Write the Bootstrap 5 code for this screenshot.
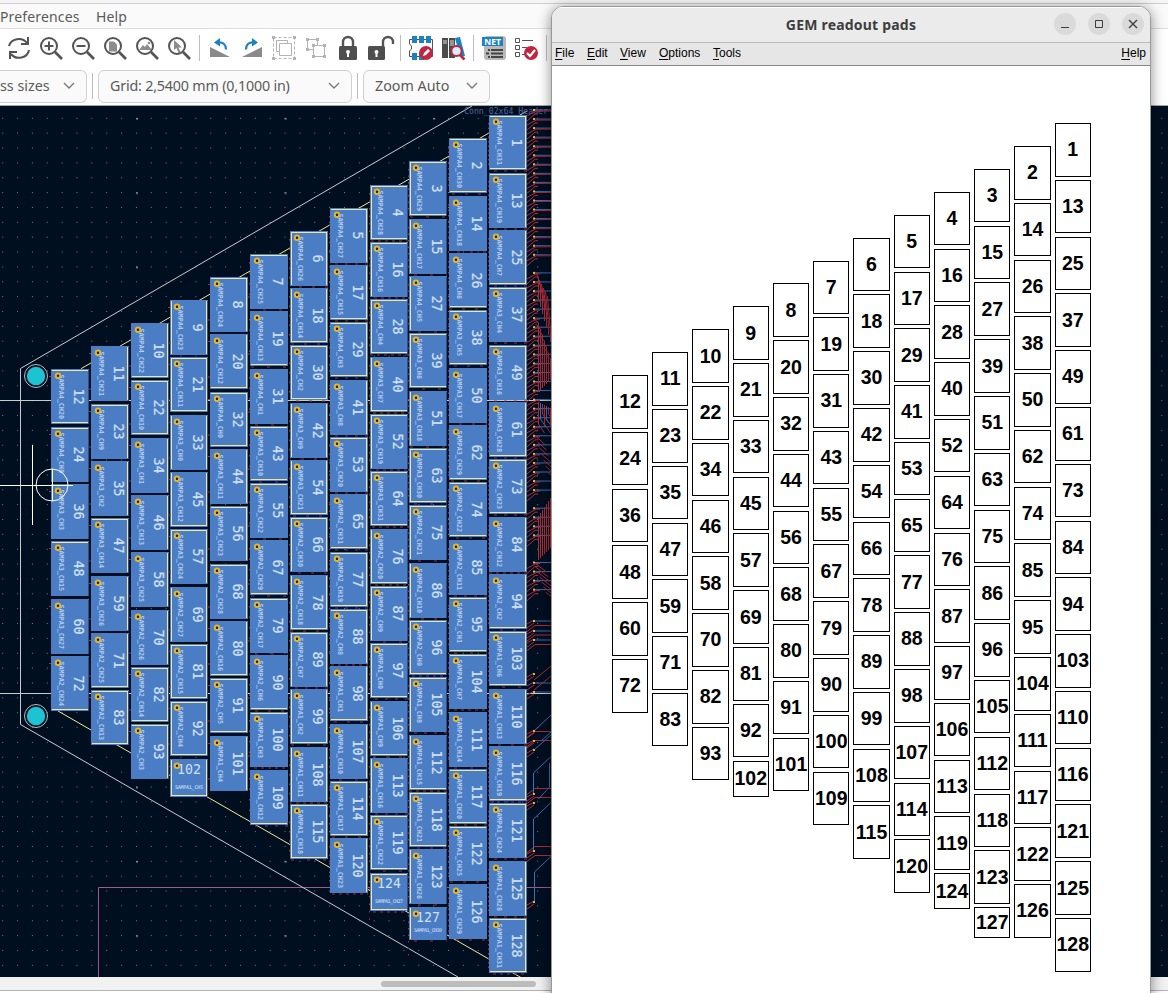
<!DOCTYPE html>
<html lang="en">
<head>
<meta charset="utf-8">
<meta name="viewport" content="width=device-width, initial-scale=1">
<title>GEM readout pads</title>
<link href="https://cdn.jsdelivr.net/npm/bootstrap@5.3.0/dist/css/bootstrap.min.css" rel="stylesheet">
<style>
body{width:1168px;height:993px;overflow:hidden;background:#fff;font-family:"Noto Sans","Open Sans",sans-serif;color:#5a5a5a}
.editor{height:993px}
.topstrip{height:4px;background:#f6f6f6;border-bottom:1px solid #cfcfcf}
.menurow{height:25px;background:#fafafa;border-bottom:1px solid #dedede;font-size:14px;line-height:25px;letter-spacing:.15px;white-space:nowrap}
.menurow span{display:block}
.toolrow{height:38px;padding-left:3px}
.toolrow svg{width:32px;height:32px;flex:none}
.vsep{width:9px;height:26px;flex:none;background:linear-gradient(#bdbdbd,#bdbdbd) 4px 0/1px 100% no-repeat}
.comborow{height:39px;border-bottom:1px solid #a5a5a5}
.combo{height:33px;border:1px solid #d0d0d0;border-radius:6px;background:#fafafa;font-size:14.3px;padding:0 11px;white-space:nowrap}
.gridcombo span{letter-spacing:-.19px}
.board{height:871px;background:#000f20}
.board svg{display:block}
.hscroll{height:14px;background:#f1f1f1;border-bottom:1px solid #b4b4b4}
.thumb{width:155px;height:6px;border-radius:3px;background:#bcbcbc;margin-left:381px}
.dialogwin{left:551px;top:6px;width:600px;height:1010px;background:#fff;border:1px solid #999;border-radius:12px 12px 0 0;box-shadow:0 2px 14px rgba(0,0,0,.45);overflow:hidden}
.titlebar{height:36px;background:#ebebeb;border-bottom:1px solid #b9b9b9;box-shadow:inset 0 1px #fff}
.wintitle{font:bold 14px "Noto Sans",sans-serif;letter-spacing:.2px;color:#3d3d3d;white-space:nowrap}
.winbtn{width:22px;height:22px;border-radius:50%;background:#dadada}
.winbtns{right:6px;top:6px;gap:12px}
.winmenu{height:23px;background:#e6e6e6;border-bottom:1px solid #868686;font:12px/21px "Liberation Sans",sans-serif;color:#000;padding:0 4px 0 3px}
.winmenu u{text-underline-offset:2px}
.padfield{padding:57.1px 0 0 59.83px;gap:3.87px}
.padcol{width:36.4px;flex:none;gap:3.24px}
.pad{border:1px solid #000;height:53.55px;flex:none;font:bold 19.5px "Liberation Sans",sans-serif;color:#000}
.pad.h36{height:36px}.pad.h31{height:31px}
text{font-family:"DejaVu Sans Mono",monospace}
</style>
</head>
<body>
<div class="editor d-flex flex-column position-relative">
  <div class="topstrip"></div>
  <div class="menurow d-flex"><span style="width:96px">Preferences</span><span>Help</span></div>
  <div class="toolrow d-flex align-items-center">
    <svg viewBox="-16 -16 32 32" fill="none" stroke="#545454" stroke-width="2"><path d="M-10-2a10 9 0 0 1 18-3M9-11v7H2M10 2A10 9 0 0 1-8 6M-9 11V4h7"/></svg>
    <svg viewBox="-16 -16 32 32" fill="none" stroke="#545454" stroke-width="2"><circle cx="-2" cy="-2" r="8"/><path d="M4 4l7 7" stroke-width="2.6"/><path d="M-6.500-2h9M-2-6.500v9"/></svg>
    <svg viewBox="-16 -16 32 32" fill="none" stroke="#545454" stroke-width="2"><circle cx="-2" cy="-2" r="8"/><path d="M4 4l7 7" stroke-width="2.6"/><path d="M-6.500-2h9"/></svg>
    <svg viewBox="-16 -16 32 32" fill="none" stroke="#545454" stroke-width="2"><path d="M-6-6.500h5l3 3v7h-8z" fill="#8c8c8c" stroke="none"/><circle cx="-2" cy="-2" r="8"/><path d="M4 4l7 7" stroke-width="2.6"/></svg>
    <svg viewBox="-16 -16 32 32" fill="none" stroke="#545454" stroke-width="2"><path d="M-8 2l4-5 2 2 2-3 5 6z" fill="#8c8c8c" stroke="none"/><circle cx="2" cy="-5" r="1.300" fill="#8c8c8c" stroke="none"/><circle cx="-2" cy="-2" r="8"/><path d="M4 4l7 7" stroke-width="2.6"/></svg>
    <svg viewBox="-16 -16 32 32" fill="none" stroke="#545454" stroke-width="2"><path d="M-5-8v10l2.500-2 2 5 2-1-2-4.500h3.500z" fill="#8c8c8c" stroke="none"/><circle cx="-2" cy="-2" r="8"/><path d="M4 4l7 7" stroke-width="2.6"/></svg>
    <i class="vsep"></i>
    <svg viewBox="-16 -16 32 32"><path d="M-10-1v10H10z" fill="#8a8a8a"/><path d="M-3-5.500c6-1 9 2 9 7" fill="none" stroke="#1a81c4" stroke-width="2.200"/><path d="M0-10l-6 4.500 6 4z" fill="#1a81c4"/></svg>
    <svg viewBox="-16 -16 32 32"><path d="M10-1v10H-10z" fill="#8a8a8a"/><path d="M3-5.500c-6-1-9 2-9 7" fill="none" stroke="#1a81c4" stroke-width="2.200"/><path d="M0-10l6 4.500-6 4z" fill="#1a81c4"/></svg>
    <svg viewBox="-16 -16 32 32" fill="none" stroke="#b3b3b3"><path d="M-10.500-10.500h21v21h-21z" stroke-dasharray="3 2"/><path d="M-7.500-7.500h11v11h-11z"/><path d="M-4.500-4.500h12v12h-12z" fill="#fff"/><g fill="#b3b3b3" stroke="none"><path d="M-12-12h3v3h-3zM9-12h3v3H9zM-12 9h3v3h-3zM9 9h3v3H9z"/></g></svg>
    <svg viewBox="-16 -16 32 32" fill="none" stroke="#b3b3b3"><path d="M-8.500-8.500h10v10h-10z"/><path d="M-2.500-2.500h11v11h-11z" fill="#fff"/><path d="M-10-10h3v3h-3zM0-10h3v3H0zM-10 0h3v3h-3zM-4-4h3v3h-3zM7-4h3v3H7zM-4 7h3v3h-3zM7 7h3v3H7z" fill="#b3b3b3" stroke="none"/></svg>
    <svg viewBox="-16 -16 32 32"><path d="M-5 0v-6a5 5 0 0 1 10 0v6" fill="none" stroke="#545454" stroke-width="2.400"/><rect x="-9" y="-2" width="18" height="14" rx="1.500" fill="#4e4e4e"/><path d="M-2 4a2 2 0 1 1 4 0l-1 2v3h-2V6z" fill="#fff"/></svg>
    <svg viewBox="-16 -16 32 32"><path d="M3 0v-6a5 5 0 0 1 10 0v2" fill="none" stroke="#545454" stroke-width="2.400"/><rect x="-12" y="-2" width="17" height="14" rx="1.500" fill="#4e4e4e"/><path d="M-5.500 4a2 2 0 1 1 4 0l-1 2v3h-2V6z" fill="#fff"/></svg>
    <i class="vsep"></i>
    <svg viewBox="-16 -16 32 32"><path d="M-11.500-8.500h23V8.500h-23V3l2-2v-3l-2-2z" fill="#fff" stroke="#545454"/><path d="M-9-12h5v7h-5zM-2-12h5v7h-5zM5-12h5v7H5zM-9 5h5v7h-5zM-2 5h5v7h-5z" fill="#1a81c4"/><circle cx="5" cy="5" r="7" fill="#bf2641"/><path d="M2 8l1-3 4-4 2 2-4 4z" fill="#fff"/></svg>
    <svg viewBox="-16 -16 32 32"><path d="M-11-10h6v20h-6zM-4-10h6v20h-6z" fill="#4b4b4b"/><path d="M-10-7h4M-10-5h4M-3-7h4M-3-5h4M-3-3h4" stroke="#ddd"/><path d="M2-10l5-1 5 19-5 1z" fill="#1a81c4"/><circle cx="3.500" cy="3" r="5" fill="#d7eef8" stroke="#bf2641" stroke-width="1.800"/><path d="M7 7l4.500 4.500" stroke="#bf2641" stroke-width="2.600"/></svg>
    <i class="vsep"></i>
    <svg viewBox="-16 -16 32 32"><rect x="-10" y="-12" width="22" height="24" rx="3" fill="#b9b9b9"/><path d="M-6 2h2M-3 2H9M-8 5.500h3M-3 5.500H9M-6 9h2M-3 9H9" stroke="#454545" stroke-width="2"/><path d="M-12-11H9v9h-21z" fill="#1a81c4"/><text x="-1.500" y="-3.500" font-size="8.500" font-weight="bold" fill="#fff" text-anchor="middle" style="font-family:'Noto Sans'">NET</text></svg>
    <svg viewBox="-16 -16 32 32" fill="none" stroke="#545454"><path d="M-10.500-9.500h4v4h-4zM-10.500-2.500h4v4h-4zM-10.500 4.500h4v4h-4zM-4-7.500H7M-4-.5h5M-4 6.500h3"/><circle cx="5" cy="5" r="7" fill="#bf2641" stroke="none"/><path d="M1 5l3 3 5-6" stroke="#fff" stroke-width="2.200"/></svg>
    <i class="vsep"></i>
  </div>
  <div class="comborow d-flex align-items-center">
    <div class="combo d-flex align-items-center justify-content-between rounded-start-0 border-start-0 ps-0" style="width:87px"><span>ss sizes</span><svg width="12" height="8" fill="none" stroke="#777" stroke-width="1.300"><path d="M1 1l5 5 5-5"/></svg></div>
    <i class="vsep" style="margin-left:1px"></i>
    <div class="combo gridcombo d-flex align-items-center justify-content-between" style="width:254px;margin-left:1px"><span>Grid: 2,5400 mm (0,1000 in)</span><svg width="12" height="8" fill="none" stroke="#777" stroke-width="1.300"><path d="M1 1l5 5 5-5"/></svg></div>
    <i class="vsep" style="margin-left:1px"></i>
    <div class="combo d-flex align-items-center justify-content-between" style="width:127px;margin-left:1px"><span>Zoom Auto</span><svg width="12" height="8" fill="none" stroke="#777" stroke-width="1.300"><path d="M1 1l5 5 5-5"/></svg></div>
  </div>
  <div class="board"><svg id="pcb" width="1168" height="871" viewBox="0 106 1168 871"></svg></div>
  <div class="hscroll d-flex align-items-center"><div class="thumb"></div></div>

  <div class="dialogwin position-absolute">
    <div class="titlebar position-relative d-flex align-items-center justify-content-center">
      <span class="wintitle">GEM readout pads</span>
      <div class="winbtns position-absolute d-flex">
        <svg class="winbtn" viewBox="0 0 22 22"><path d="M7 14.500h8" stroke="#3d3d3d"/></svg>
        <svg class="winbtn" viewBox="0 0 22 22"><path d="M7.500 7.500h7v7h-7z" stroke="#3d3d3d" fill="none"/></svg>
        <svg class="winbtn" viewBox="0 0 22 22"><path d="M7 7l8 8M15 7l-8 8" stroke="#3d3d3d" stroke-width="1.300"/></svg>
      </div>
    </div>
    <div class="winmenu d-flex"><span style="width:32px"><u>F</u>ile</span><span style="width:33px"><u>E</u>dit</span><span style="width:39px"><u>V</u>iew</span><span style="width:54px"><u>O</u>ptions</span><span><u>T</u>ools</span><span class="ms-auto"><u>H</u>elp</span></div>
    <div class="padfield d-flex align-items-start" id="pads"></div>
  </div>
</div>
<script src="https://cdn.jsdelivr.net/npm/bootstrap@5.3.0/dist/js/bootstrap.bundle.min.js"></script>
<script>
// Pad numbers per column, rightmost column first
const counts=[15,14,14,13,12,11,10,9,9,8,7,6];
const cols=counts.map(()=>[]);
let n=1;
for(let r=0;r<15;r++)for(let c=0;c<12;c++)if(r<counts[c])cols[c].push(n++);

// Readout window
const field=document.getElementById('pads');
for(let c=11;c>=0;c--){
  const d=document.createElement('div');
  d.className='padcol d-flex flex-column';
  d.style.marginTop=(c*22.91)+'px';
  d.innerHTML=cols[c].map(k=>`<div class="pad d-flex align-items-center justify-content-center ${k==127?'h31':k==102||k==124?'h36':''}">${k}</div>`).join('');
  field.appendChild(d);
}

// Board view
const L=(x1,y1,x2,y2,s,w=1,x='')=>`<path d="M${x1} ${y1}L${x2} ${y2}" stroke="${s}" stroke-width="${w}" ${x}/>`;
const P=(d,s)=>`<path d="${d}" fill="none" stroke="${s}"/>`;
const red='#b32a35',blue='#3e6fb8',gold='#e3b62c',yel='#eee79c',grey='#c6cbd0';
let s=`<defs><pattern id="g" x="2.2" y="117.800" width="14.860" height="14.860" patternUnits="userSpaceOnUse"><rect width="1" height="1" fill="#78808a"/></pattern>
<pattern id="h" x="136" y="118" width="148.600" height="74.300" patternUnits="userSpaceOnUse"><rect width="2" height="1.500" fill="#858b93"/></pattern></defs>
<rect y="106" width="1168" height="871" fill="url(#g)"/><rect y="106" width="1168" height="871" fill="url(#h)"/>`;
s+=L(0,400.5,551,400.5,grey)+L(0,693.5,551,693.5,grey);
s+=P('M98.5 977V887.500H551','#a0588f');
s+=P('M472 106L20.500 368.500V724.500L458 977',grey);
s+=L(81,368.7,527,111,yel)+L(58,711,527,981,yel);
s+=`<text x="464" y="113.500" font-size="8" fill="#56639a" textLength="84" lengthAdjust="spacingAndGlyphs">Conn_02x64_Header</text>`;
// Fan-out traces beside the right column
const vias=[];
for(let y=110;y<595;y+=9.05){
  if(Math.abs(y-262)<5||Math.abs(y-500)<6||Math.abs(y-553)<9)continue;
  vias.push(y);
  s+=L(534,y,551,y,blue)+P(`M527 ${y+6}l9-5h${y<265?15:4}`,red)+P(`M527 ${y+11}l8-7h3`,red);
}
// Bundled vertical runs
for(let i=0;i<7;i++){const x=538.5+i*2;
  s+=P(`M${x-3} ${272+i*4}L${x} ${278+i*9}V${300+i*7}`,red);
  s+=P(`M${x-5} ${318+i*6}L${x} ${323+i*6}V${392-i*2}`,red);
  s+=P(`M${x} ${402+i}V${424-(i%3)*5}l6 9`,i%3==1?blue:red);
  s+=P(`M${x-3} ${436+i*6}L${x+6} ${444+i*6}`,red);
  s+=P(`M${x} ${516-i*3}V${560-i*2}`,red);
  s+=P(`M${x-5} ${562+i*5}l13 10`,red);
}
[621,631,640,683,692].forEach(y=>{s+=L(534,y,551,y,blue)});
[621,631,640,674,683,692,731,741,750,794,803,851,902].forEach(y=>{vias.push(y);s+=P(`M527 ${y+7}l7-5`,red)+P(`M527 ${y+3}l7-4`,red)});
[625.5,635,644.5,731.5,740.5,788.5,797.5,846.5,855.5].forEach(y=>{s+=P(`M527 ${y+6}l8-6h16`,red)});
[680,690].forEach(y=>{s+=P(`M534 ${y}l17-14`,red)});
s+=P('M534 731l17-16M534 750l17-15M541 741l10-9M533.500 794v-21l17-16M549.500 763v24l-11 12M533.500 851v-32l17-16M534.500 902v-30l17-16',blue);
vias.forEach(y=>{s+=`<rect x="533" y="${y-1}" width="2" height="2" fill="${gold}"/>`});

// Pads whose upper or lower silkscreen line is visible
const top_=new Set([1,13,37,49,73,103,121,128,2,38,74,95,104,117,122,3,39,63,75,96,105,118,124,119,12,24,48,23,47,83,22,82,93,21,57,81,92,4,16,28,52,64,87,97,5,29,53,77,88,114,6,30,66,89,115,7,43,55,79,100,8,32,56,91,68]);
const bot=new Set([1,25,61,73,94,103,116,128,2,26,38,62,74,95,117,3,39,63,96,112,118,124,119,12,72,71,83,10,22,82,21,45,81,92,102,4,28,40,64,76,97,106,17,29,65,77,98,114,18,30,54,78,99,115,19,43,67,90,109,20,32,80,91]);
const right=new Set([0,4,7,8,9,10,5]),left=new Set([2,3,8,5]);
cols.forEach((col,c)=>col.forEach((k,r)=>{
  const x=Math.round(489-c*39.82),y=Math.round(115.3+c*23.09+r*57.33);
  const short=k==102||k==124?38:k==127?33:0,h=short||55;
  s+=`<rect x="${x}" y="${y}" width="38" height="${h}" fill="#4a7dc4"/>`;
  if(top_.has(k))s+=L(x+1,y+1.5,x+37,y+1.5,yel);
  if(bot.has(k))s+=L(x+1,y+h-1.5,x+37,y+h-1.5,yel);
  if(right.has(c))s+=L(x+36.5,y+1,x+36.5,y+h-1,yel);
  if(left.has(c))s+=L(x+1.5,y+1,x+1.5,y+h-1,yel);
  if(c==2||c==3||c>=8)s+=L(x+37.5,y+1,x+37.5,y+h,'#16345f',.6);
  if(c<7){
    s+=L(x,y+h+1,x+38,y+h+1,red,1,`stroke-dasharray="3 ${4+k%4*3}" stroke-dashoffset="${k*5}"`);
    s+=L(x-.5,y+8,x-.5,y+50,red,1,`stroke-dasharray="1.500 ${3+c}"`);
  }else s+=L(x-2,y+7.500,x,y+7.500,red)+L(x+38,y+20,x+40,y+20,red);
  const chip=k<=32?`SAMPA4_CH${32-k}`:k<=64?`SAMPA3_CH${k-33}`:k<=96?`SAMPA2_CH${96-k}`:`SAMPA1_CH${k-97}`;
  if(short)s+=`<text x="${x+19}" y="${y+15}" font-size="13.200" fill="#d3e0f5" text-anchor="middle">${k}</text><text x="${x+5}" y="${y+short-8}" font-size="5.200" font-weight="bold" fill="#b4caec" textLength="28">${chip}</text>`;
  else s+=`<text transform="translate(${x+23} ${y+h/2}) rotate(90)" font-size="13.400" fill="#d3e0f5" stroke="#d3e0f5" stroke-width=".2" text-anchor="middle">${k}</text><text transform="translate(${x+8.300} ${y+5.500}) rotate(90)" font-size="6.800" font-weight="bold" fill="#b4caec" textLength="${chip.length*4.05}">${chip}</text>`;
  s+=`<circle cx="${x+7}" cy="${y+6.800}" r="2.200" fill="#111a28" stroke="${gold}" stroke-width="2"/>`;
}));
// Mounting holes and cursor
[376,716].forEach(y=>{s+=`<circle cx="36" cy="${y}" r="11.500" fill="#000f20" stroke="#b9bcc2"/><circle cx="36" cy="${y}" r="9.200" fill="#1ec3d3"/>`});
s+=P('M0 485.500H73M32.500 445V525M52.500 469V501','#fff')+'<circle cx="52" cy="485" r="16" fill="none" stroke="#fff"/>';
document.getElementById('pcb').innerHTML=s;
</script>
</body>
</html>
